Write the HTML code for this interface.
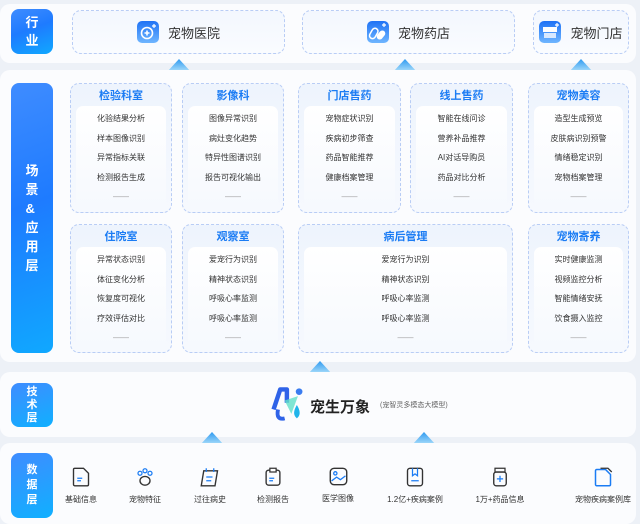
<!DOCTYPE html>
<html><head><meta charset="utf-8">
<style>
*{margin:0;padding:0;box-sizing:border-box}
body{width:640px;height:524px;background:#edf1f7;font-family:"Liberation Sans","Noto Sans CJK SC",sans-serif;position:relative;overflow:hidden;color:#333}
.panel{position:absolute;left:0;width:636px;background:#fbfcfe;border-radius:10px}
.lab{position:absolute;left:11px;width:42px;border-radius:8px;background:linear-gradient(160deg,#3f8cff 0%,#1e7bff 45%,#10a8ff 100%);color:#fff;font-weight:bold;font-size:13px;display:flex;flex-direction:column;align-items:center;justify-content:center;line-height:18px}
.ind{position:absolute;top:10px;height:44px;border:1px dashed #b9cdf5;border-radius:9px;background:linear-gradient(#f3f7fe,#fafcff);display:flex;align-items:center;justify-content:center;font-size:13px;color:#333}
.ind svg{margin-right:9px}
.card{position:absolute;border:1px dashed #b9cdf5;border-radius:9px;background:linear-gradient(#eef4fd,#f6f9fe)}
.card h4{text-align:center;color:#1b7cf4;font-size:11px;font-weight:bold;height:22px;line-height:24px}
.card .in{position:absolute;left:5px;right:5px;top:22px;bottom:5px;background:linear-gradient(#fff,#f6f9fe);border-radius:7px;text-align:center;font-size:8px;color:#333;padding-top:3px}
.card .in div{height:19.5px;line-height:19.5px}
.card .in .d{color:#999;font-size:8px}
.arr{position:absolute;width:24px;height:13px;clip-path:polygon(50% 0,100% 100%,0 100%);background:linear-gradient(#2f9af0,#aee0fb)}
.dat{position:absolute;top:467px;width:80px;text-align:center;font-size:8px;color:#333}
.dat svg{display:block;margin:0 auto 7px}
</style></head><body>

<div class="panel" style="top:4px;height:59px"></div>
<div class="lab" style="top:9px;height:45px">行<br>业</div>
<div class="ind" style="left:72px;width:213px"><svg width="22" height="22" viewBox="0 0 22 22"><defs><linearGradient id="g1" x1="0" y1="0" x2="0" y2="1"><stop offset="0" stop-color="#1f72f5"/><stop offset="1" stop-color="#6fb6ff"/></linearGradient></defs><rect width="22" height="22" rx="5" fill="url(#g1)"/><circle cx="10" cy="12" r="5.5" fill="none" stroke="#fff" stroke-width="1.6"/><path d="M10 9.5v5M7.5 12h5" stroke="#fff" stroke-width="1.6"/><path d="M17 3v4M15 5h4" stroke="#fff" stroke-width="1.2"/></svg>宠物医院</div>
<div class="ind" style="left:302px;width:213px"><svg width="22" height="22" viewBox="0 0 22 22"><rect width="22" height="22" rx="5" fill="url(#g1)"/><rect x="4" y="7" width="6" height="11" rx="3" fill="none" stroke="#fff" stroke-width="1.5" transform="rotate(30 7 12)"/><rect x="11" y="9" width="6" height="10" rx="3" fill="#fff" transform="rotate(40 14 14)"/><path d="M17 2v4M15 4h4" stroke="#fff" stroke-width="1.2"/></svg>宠物药店</div>
<div class="ind" style="left:533px;width:96px"><svg width="22" height="22" viewBox="0 0 22 22"><rect width="22" height="22" rx="5" fill="url(#g1)"/><rect x="4" y="6" width="14" height="5" fill="#fff"/><rect x="5" y="12" width="12" height="5" fill="#d8e9ff"/><path d="M18 2v4M16 4h4" stroke="#fff" stroke-width="1.2"/></svg>宠物门店</div>
<div class="arr" style="left:167px;top:59px"></div>
<div class="arr" style="left:393px;top:59px"></div>
<div class="arr" style="left:569px;top:59px"></div>

<div class="panel" style="top:70px;height:292px"></div>
<div class="lab" style="top:83px;height:270px;line-height:19px">场<br>景<br>&amp;<br>应<br>用<br>层</div>

<div class="card" style="left:70px;top:83px;width:102px;height:130px"><h4>检验科室</h4><div class="in"><div>化验结果分析</div><div>样本图像识别</div><div>异常指标关联</div><div>检测报告生成</div><div class="d">——</div></div></div>
<div class="card" style="left:182px;top:83px;width:102px;height:130px"><h4>影像科</h4><div class="in"><div>图像异常识别</div><div>病灶变化趋势</div><div>特异性图谱识别</div><div>报告可视化输出</div><div class="d">——</div></div></div>
<div class="card" style="left:298px;top:83px;width:103px;height:130px"><h4>门店售药</h4><div class="in"><div>宠物症状识别</div><div>疾病初步筛查</div><div>药品智能推荐</div><div>健康档案管理</div><div class="d">——</div></div></div>
<div class="card" style="left:410px;top:83px;width:103px;height:130px"><h4>线上售药</h4><div class="in"><div>智能在线问诊</div><div>营养补品推荐</div><div>AI对话导购员</div><div>药品对比分析</div><div class="d">——</div></div></div>
<div class="card" style="left:528px;top:83px;width:101px;height:130px"><h4>宠物美容</h4><div class="in"><div>造型生成预览</div><div>皮肤病识别预警</div><div>情绪稳定识别</div><div>宠物档案管理</div><div class="d">——</div></div></div>

<div class="card" style="left:70px;top:224px;width:102px;height:129px"><h4>住院室</h4><div class="in"><div>异常状态识别</div><div>体征变化分析</div><div>恢复度可视化</div><div>疗效评估对比</div><div class="d">——</div></div></div>
<div class="card" style="left:182px;top:224px;width:102px;height:129px"><h4>观察室</h4><div class="in"><div>爱宠行为识别</div><div>精神状态识别</div><div>呼吸心率监测</div><div>呼吸心率监测</div><div class="d">——</div></div></div>
<div class="card" style="left:298px;top:224px;width:215px;height:129px"><h4>病后管理</h4><div class="in"><div>爱宠行为识别</div><div>精神状态识别</div><div>呼吸心率监测</div><div>呼吸心率监测</div><div class="d">——</div></div></div>
<div class="card" style="left:528px;top:224px;width:101px;height:129px"><h4>宠物寄养</h4><div class="in"><div>实时健康监测</div><div>视频监控分析</div><div>智能情绪安抚</div><div>饮食摄入监控</div><div class="d">——</div></div></div>

<div class="arr" style="left:308px;top:361px"></div>
<div class="panel" style="top:372px;height:65px"></div>
<div class="lab" style="top:383px;height:44px;font-size:11px;line-height:13px;background:linear-gradient(160deg,#3f8cff,#10b0ff)">技<br>术<br>层</div>
<div style="position:absolute;left:269px;top:385px;width:38px;height:40px">
<svg width="38" height="40" viewBox="0 0 34 36"><path d="M4 22 L10 4 L16 4 L16 16" fill="none" stroke="#2f63e8" stroke-width="4" stroke-linejoin="round"/><path d="M8 22 Q6 32 14 30" fill="none" stroke="#2f63e8" stroke-width="3.5"/><path d="M14 14 L26 10 L20 26 Z" fill="#62e0c8" opacity=".8"/><path d="M25 18 Q20 26 25 30 Q30 26 25 18Z" fill="#20b4ea"/><circle cx="27" cy="6" r="3" fill="#3a7cf0"/></svg></div>
<div style="position:absolute;left:310px;top:396px;font-size:15px;font-weight:bold;color:#222">宠生万象</div>
<div style="position:absolute;left:380px;top:400px;font-size:7px;color:#666">(宠智灵多模态大模型)</div>

<div class="arr" style="left:200px;top:432px"></div>
<div class="arr" style="left:412px;top:432px"></div>
<div class="panel" style="top:443px;height:81px"></div>
<div class="lab" style="top:453px;height:65px;font-size:11px;line-height:15px;background:linear-gradient(160deg,#3f8cff,#10b0ff)">数<br>据<br>层</div>

<div class="dat" style="left:41px"><svg width="18" height="20" viewBox="0 0 14 16"><path d="M2 1h7l4 4v9a1 1 0 0 1-1 1H2a1 1 0 0 1-1-1V2a1 1 0 0 1 1-1z" fill="none" stroke="#333" stroke-width="1.1"/><path d="M4 9h4M4 11h3" stroke="#1b7cf4" stroke-width="1"/></svg>基础信息</div>
<div class="dat" style="left:105px"><svg width="20" height="20" viewBox="0 0 16 16"><circle cx="4" cy="5" r="1.6" fill="none" stroke="#1b7cf4"/><circle cx="8" cy="3" r="1.6" fill="none" stroke="#1b7cf4"/><circle cx="12" cy="5" r="1.6" fill="none" stroke="#1b7cf4"/><ellipse cx="8" cy="11" rx="4" ry="3.5" fill="none" stroke="#333" stroke-width="1.1"/></svg>宠物特征</div>
<div class="dat" style="left:170px"><svg width="20" height="20" viewBox="0 0 16 16"><path d="M3 3h11l-2 12H1z" fill="none" stroke="#333" stroke-width="1.1"/><path d="M5 1v3M11 1v3M5 8h5M5 11h4" stroke="#1b7cf4"/></svg>过往病史</div>
<div class="dat" style="left:233px"><svg width="18" height="20" viewBox="0 0 14 16"><rect x="1.5" y="2.5" width="11" height="12" rx="2" fill="none" stroke="#333" stroke-width="1.1"/><rect x="4.5" y="1" width="5" height="3" fill="#fff" stroke="#333"/><path d="M4 9h4M4 11h3" stroke="#1b7cf4"/></svg>检测报告</div>
<div class="dat" style="left:298px"><svg width="19" height="19" viewBox="0 0 15 15"><rect x="1" y="1" width="13" height="13" rx="3" fill="none" stroke="#333" stroke-width="1.1"/><circle cx="5" cy="5" r="1.3" fill="none" stroke="#1b7cf4"/><path d="M2 11l4-3 3 2 4-3" fill="none" stroke="#1b7cf4"/></svg>医学图像</div>
<div class="dat" style="left:375px"><svg width="18" height="20" viewBox="0 0 14 16"><rect x="1" y="1" width="12" height="14" rx="2" fill="none" stroke="#333" stroke-width="1.1"/><path d="M5 1v6l2-1.5 2 1.5V1" fill="none" stroke="#1b7cf4"/><path d="M4 11h6" stroke="#1b7cf4"/></svg>1.2亿+疾病案例</div>
<div class="dat" style="left:460px"><svg width="18" height="20" viewBox="0 0 14 16"><rect x="3" y="1" width="8" height="3" fill="none" stroke="#333"/><rect x="2" y="4" width="10" height="11" rx="2" fill="none" stroke="#333" stroke-width="1.1"/><path d="M7 7v5M4.5 9.5h5" stroke="#1b7cf4"/></svg>1万+药品信息</div>
<div class="dat" style="left:563px"><svg width="20" height="20" viewBox="0 0 16 16"><path d="M3 2h7l4 4v8a1 1 0 0 1-1 1H3a1 1 0 0 1-1-1V3a1 1 0 0 1 1-1z" fill="none" stroke="#1b7cf4" stroke-width="1.2"/><path d="M6 1h6l3 3" fill="none" stroke="#333"/></svg>宠物疾病案例库</div>
</body></html>
